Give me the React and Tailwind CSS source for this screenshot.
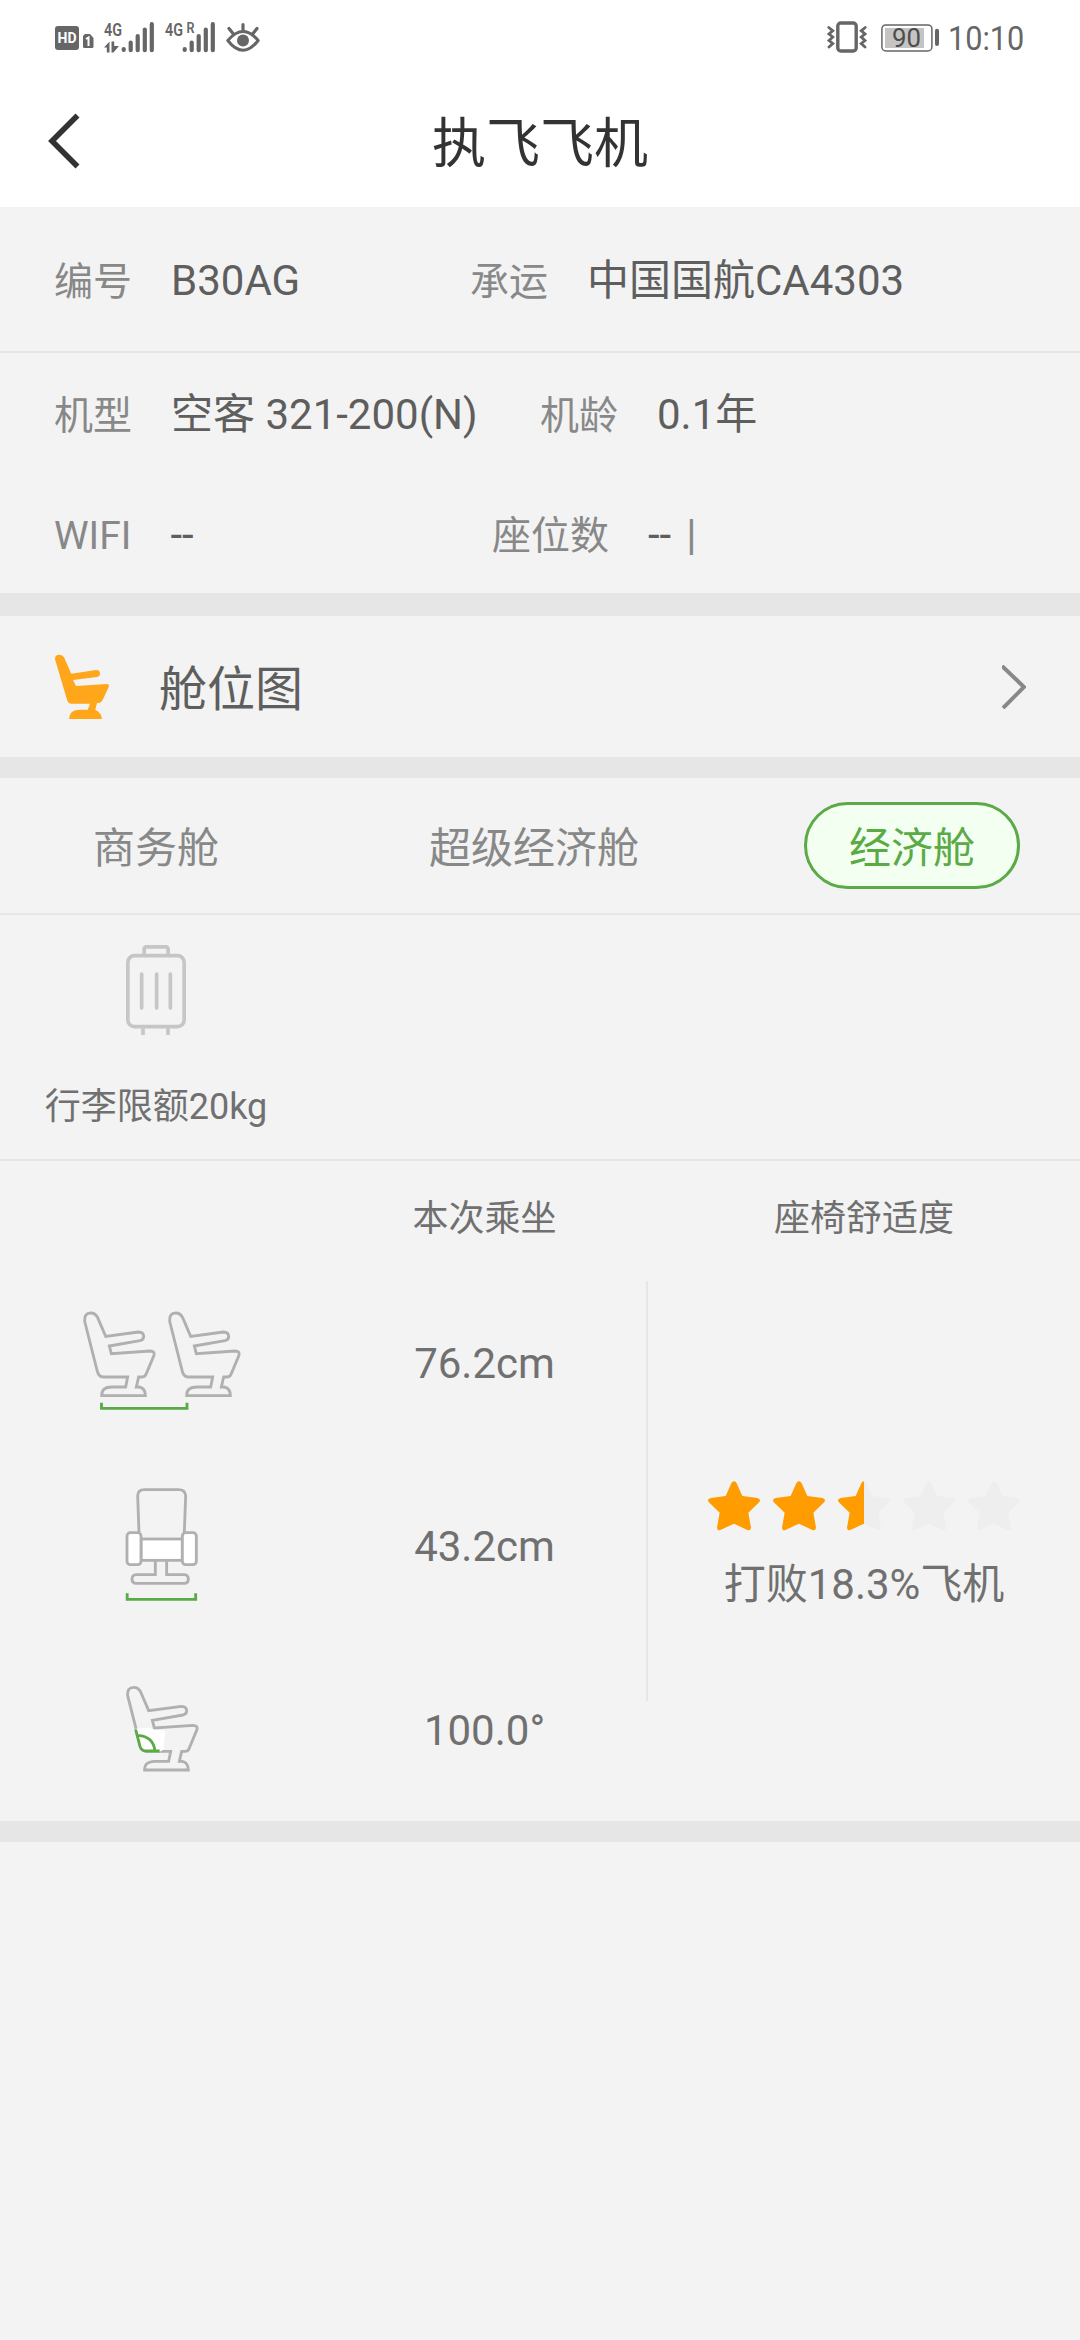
import React from 'react';

const SEAT_PATH =
  'M112 245 L74 95 Q72 70 92 70 Q106 70 113 84 L137 140 L235 127 Q251 127 251 141 Q251 150 240 153 L148 169 L154 192 L270 184 Q285 184 282 197 L258 254 Q255 262 247 262 H236 L229 292 H238 Q256 296 256 318 H125 Q124 292 156 292 H197 L203 262 H130 Q116 261 112 245 Z';

const STAR_PATH =
  'M282 66 Q287 66 290 72 L307 110 L352 116 Q364 119 358 128 L325 160 L333 205 Q332 215 322 212 L282 193 L241 212 Q232 215 231 205 L239 160 L206 128 Q200 119 212 116 L257 110 L274 72 Q277 66 282 66 Z';

const CABINS = ['商务舱', '超级经济舱', '经济舱'];

// Status bar icons
const HdIcon = () => (
  <svg className="w-[39px] h-[32px] overflow-visible" viewBox="0 0 39 32" fill="#666">
    <rect x="0" y="5" width="24" height="24" rx="3" />
    <text x="2.6" y="22.2" fill="#fff" fontSize="15" fontWeight="700" textLength="19" lengthAdjust="spacingAndGlyphs">HD</text>
    <path d="M30 13 H35 L38.5 17 V25.5 Q38.5 27 37 27 H29.5 Q28 27 28 25.5 V15 Z" />
    <path d="M31 18 L33.5 16.5 V25" stroke="#fff" strokeWidth="2" fill="none" />
  </svg>
);

const SignalIcon = ({ roaming }) => (
  <svg className="w-[50px] h-[32px] overflow-visible" viewBox="0 0 50 32" fill="#666">
    <text x="0" y="15" fontSize="19" fontWeight="600" textLength="18" lengthAdjust="spacingAndGlyphs">4G</text>
    {roaming ? (
      <text x="21.5" y="12" fontSize="15.5" fontWeight="600" textLength="8" lengthAdjust="spacingAndGlyphs">R</text>
    ) : (
      <path d="M0 26.5 L5.5 20.5 V31.5 H2.8 V26.5 Z M7.5 20.5 H10.2 V25 H15 L9.5 31.5 H7.5 Z" />
    )}
    <g stroke="#666" strokeWidth="4.2" strokeLinecap="round">
      <path d="M19.7 28 V29 M26.7 21.5 V29.2 M33.7 15 V29.2 M40.8 8.5 V29.2 M47.8 3.2 V29.2" />
    </g>
  </svg>
);

const EyeIcon = () => (
  <svg className="w-[34px] h-[32px]" viewBox="0 0 34 32" fill="none" stroke="#666">
    <path d="M1.8 19.5 Q17 1.5 32.2 19.5 Q17 39 1.8 19.5 Z" strokeWidth="3" strokeLinejoin="round" />
    <circle cx="17" cy="19.4" r="6" fill="#666" stroke="none" />
    <path d="M17 10 V3.5 M7 12.5 L3 7.5 M27 12.5 L31 7.5" strokeWidth="3.2" strokeLinecap="round" />
  </svg>
);

const VibrateIcon = () => (
  <svg className="w-[40px] h-[32px]" viewBox="0 0 40 32" fill="none" stroke="#666">
    <rect x="10.8" y="2" width="18.4" height="28" rx="3" strokeWidth="3.4" />
    <path d="M1.8 6.5 L5.8 9.8 L2 13 L5.8 16 L2 19.5 L5.8 22.5 L2 26" strokeWidth="2.8" strokeLinecap="round" />
    <path d="M38.2 6.5 L34.2 9.8 L38 13 L34.2 16 L38 19.5 L34.2 22.5 L38 26" strokeWidth="2.8" strokeLinecap="round" />
  </svg>
);

const BatteryIcon = ({ level }) => (
  <svg className="w-[58px] h-[28px] overflow-visible" viewBox="0 0 58 28">
    <rect x="0.9" y="0.9" width="50" height="26" rx="4" fill="none" stroke="#666" strokeWidth="1.5" />
    <rect x="4" y="4" width="39" height="20" fill="#c4c4c4" />
    <path d="M56 6.8 V20" stroke="#666" strokeWidth="4" strokeLinecap="round" />
    <text x="11" y="22.5" fontSize="26" fill="#4d4d4d" textLength="29" lengthAdjust="spacingAndGlyphs">{level}</text>
  </svg>
);

// Cabin icons
const CabinSeatIcon = () => (
  <svg className="w-[56px] h-[66px]" viewBox="162 162 168 198" fill="#ffa61a">
    <path d="M165 178 Q164 164 178 164 Q188 164 192 172 L214 221 L288 210 Q299 209 300 220 Q300 230 291 231 L219 240 L228 258 L320 252 Q329 252 326 261 L309 298 Q304 309 296 309 L291 309 L286 329 Q304 338 306 357 H207 Q209 330 235 329 H263 L270 311 H213 Q205 310 202 302 Z" />
  </svg>
);

const LuggageIcon = () => (
  <svg className="w-[60px] h-[90px]" viewBox="378 135 180 270" fill="none" stroke="#c6c6c6" strokeWidth="11">
    <rect x="383.5" y="167" width="169" height="213" rx="20" />
    <path d="M432.5 162 V147 Q433 140.5 440 140.5 H497 Q504 141 504.5 148 V162" />
    <path d="M425 222 V324 M470 222 V324 M511 222 V324" strokeLinecap="round" />
    <path d="M429 385 V405 M504 385 V405" />
  </svg>
);

const SeatPitchIcon = () => (
  <svg className="w-[160px] h-[100px]" viewBox="66 64 480 300" fill="none">
    <g stroke="#b0b0b0" strokeWidth="8.5">
      <path d={SEAT_PATH} />
      <path d={SEAT_PATH} transform="translate(255 0)" />
    </g>
    <path d="M124.5 339 V356 H381 V339" stroke="#5aaa46" strokeWidth="8.5" />
  </svg>
);

const SeatWidthIcon = () => (
  <svg className="w-[74px] h-[115px]" viewBox="74 51 222 345" fill="none">
    <g stroke="#b0b0b0" strokeWidth="8.5">
      <path d="M116 187 L112 77 Q113 59 132 59 H235 Q254 59 256 77 L252 187" />
      <path d="M165 274 V314 H108 Q95 315 95 327 Q95 340 108 340 H252 Q264 340 264 327 Q264 315 252 314 H199 V274" />
      <rect x="122" y="207" width="124" height="64" fill="#fff" />
      <rect x="80" y="188" width="42" height="96" rx="10" fill="#fff" />
      <rect x="246" y="188" width="42" height="96" rx="10" fill="#fff" />
    </g>
    <path d="M80.5 370 V388 H286 V370" stroke="#5aaa46" strokeWidth="8.5" />
  </svg>
);

const SeatReclineIcon = () => (
  <svg className="w-[74px] h-[88px]" viewBox="74 43 222 264" fill="none">
    <path d={SEAT_PATH} transform="translate(8 -17)" stroke="#b0b0b0" strokeWidth="8.5" />
    <path d="M106 177 L150 174 L162 180 L195 184 L193 200 L189 240 L178 246 L125 244 Z" fill="#fff" />
    <path d="M106 180 L119 230 Q123 244 138 244 H178 M113 197 Q159 200 164 244" stroke="#5aaa46" strokeWidth="8.5" />
  </svg>
);

const Star = ({ fill }) => (
  <svg className="w-[52px] h-[50px]" viewBox="204 65 156 150">
    <path d={STAR_PATH} fill="#eee" />
    <clipPath id={`star-${fill}`}>
      <rect x="204" y="65" width={156 * fill} height="150" />
    </clipPath>
    <path d={STAR_PATH} fill="#ff9c00" clipPath={`url(#star-${fill})`} />
  </svg>
);

const Field = ({ label, children, className = '' }) => (
  <div className={`flex items-baseline gap-[39px] ${className}`}>
    <span className="text-[39px] leading-[48px] text-[#888]">{label}</span>
    <span className="text-[42px] leading-[48px] text-[#5e5e5e]">{children}</span>
  </div>
);

const MEASURES = [
  { value: '76.2cm', icon: SeatPitchIcon },
  { value: '43.2cm', icon: SeatWidthIcon },
  { value: '100.0°', icon: SeatReclineIcon },
];

function App() {
  const [cabin, setCabin] = React.useState('经济舱');

  return (
    <div className="w-[1080px] h-[2340px] overflow-hidden bg-[#f3f3f3] font-['Roboto','Noto_Sans_CJK_SC',sans-serif] whitespace-nowrap">
      <div className="h-[207px] bg-white">
        {/* Status bar */}
        <div className="flex h-[76px] pt-[21px] pl-[55px] pr-[55px] text-[#666]">
          <HdIcon />
          <div className="ml-[10px]"><SignalIcon /></div>
          <div className="ml-[11px]"><SignalIcon roaming /></div>
          <div className="ml-[11px]"><EyeIcon /></div>
          <div className="ml-auto"><VibrateIcon /></div>
          <div className="ml-[14px] pt-[3px]"><BatteryIcon level="90" /></div>
          <span className="ml-[9px] w-[77px] text-[34px] leading-[34px] origin-left scale-x-[0.9]">10:10</span>
        </div>

        {/* Title bar */}
        <header className="grid grid-cols-[200px_1fr_200px] h-[131px]">
          <button className="pl-[46px] pt-[37px] flex items-start">
            <svg className="w-[36px] h-[56px]" viewBox="0 0 36 56" fill="none" stroke="#333" strokeWidth="5.6">
              <path d="M31.5 2.5 L6 28 L31.5 53.5" />
            </svg>
          </button>
          <h1 className="pt-[37px] text-center text-[54px] leading-[64px] text-[#333]">执飞飞机</h1>
        </header>
      </div>

      {/* Aircraft info */}
      <div className="flex h-[146px] pt-[50px] pl-[54px] border-b-2 border-[#e6e6e6]">
        <Field label="编号" className="w-[416px]">B30AG</Field>
        <Field label="承运">中国国航CA4303</Field>
      </div>
      <div className="h-[240px] pt-[38px] pl-[54px] flex flex-col gap-[71px]">
        <div className="flex">
          <Field label="机型" className="w-[486px]">空客 321-200(N)</Field>
          <Field label="机龄">0.1年</Field>
        </div>
        <div className="flex">
          <Field label="WIFI" className="w-[438px]">--</Field>
          <Field label="座位数">
            --<span className="ml-[15px] text-[#888]">|</span>
          </Field>
        </div>
      </div>

      {/* Seat map entry */}
      <div className="flex items-center h-[185px] pl-[54px] pr-[54px] border-t-[23px] border-b-[21px] border-[#e6e6e6]">
        <CabinSeatIcon />
        <span className="ml-[49px] pt-[6px] text-[48px] leading-[56px] text-[#5e5e5e]">舱位图</span>
        <svg className="ml-auto w-[24px] h-[44px]" viewBox="0 0 24 44" fill="none" stroke="#888" strokeWidth="4">
          <path d="M0 1 L22 22 L1 43" />
        </svg>
      </div>

      {/* Cabin tabs */}
      <div className="flex gap-[162px] h-[137px] pt-[24px] pl-[48px] border-b-2 border-[#e6e6e6]">
        {CABINS.map((name) => (
          <button
            key={name}
            onClick={() => setCabin(name)}
            className={`flex items-center justify-center w-[216px] h-[87px] pt-[6px] rounded-full border-[3px] text-[42px] ${
              cabin === name
                ? 'border-[#5aaa46] bg-[#f3fff0] text-[#5aaa46]'
                : 'border-transparent text-[#888]'
            }`}
          >
            {name}
          </button>
        ))}
      </div>

      <div className="h-[246px] pt-[30px] border-b-2 border-[#e6e6e6]">
        <div className="flex flex-col items-center w-[312px]">
          <LuggageIcon />
          <span className="mt-[50px] text-[36px] leading-[44px] text-[#707070]">行李限额20kg</span>
        </div>
      </div>

      {/* Seat comfort */}
      <div className="h-[681px] border-b-[21px] border-[#e6e6e6] text-[#707070]">
        <div className="flex h-[111px] pt-[36px] text-[36px] leading-[44px] text-center">
          <span className="ml-[323px] w-[323px]">本次乘坐</span>
          <span className="ml-[2px] w-[432px]">座椅舒适度</span>
        </div>
        <div className="flex">
          <div className="w-[646px]">
            {MEASURES.map((item) => (
              <div key={item.value} className="grid grid-cols-2 h-[183.5px] items-center justify-items-center">
                <div className="mb-[5px]"><item.icon /></div>
                <span className="text-[42px] leading-[48px]">{item.value}</span>
              </div>
            ))}
          </div>
          <div className="flex flex-col items-center w-[434px] h-[420px] mt-[9px] pt-[200px] border-l-2 border-[#e6e6e6]">
            <div className="flex gap-[13px]">
              {[1, 1, 0.5, 0, 0].map((fill, i) => (
                <Star key={i} fill={fill} />
              ))}
            </div>
            <span className="mt-[30px] text-[42px] leading-[48px]">打败18.3%飞机</span>
          </div>
        </div>
      </div>
    </div>
  );
}

export default App;
